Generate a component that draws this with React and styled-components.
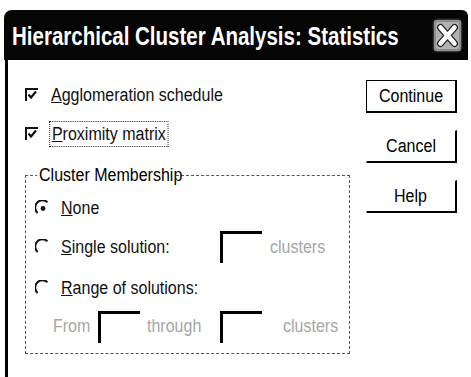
import styled, { createGlobalStyle } from "styled-components";

const Global = createGlobalStyle`
  html, body {
    margin: 0;
    background: #ffffff;
  }
  body {
    font-family: "Liberation Sans", Arial, sans-serif;
  }
`;

const Window = styled.div`
  width: 471px;
  height: 377px;
  padding-top: 10px;
  box-sizing: border-box;
  display: flex;
  flex-direction: column;
  overflow: hidden;
  background: #fff;
`;

const TitleBar = styled.div`
  height: 50px;
  margin: 0 3px 0 4px;
  background: #050505;
  border-radius: 8px 6px 0 0;
  display: flex;
  align-items: center;
  justify-content: space-between;
  padding: 0 5px 0 8px;
  box-sizing: border-box;
`;

const Title = styled.span`
  display: block;
  width: 390px;
  color: #fff;
  font-weight: bold;
  font-size: 25px;
  white-space: nowrap;
  padding-top: 2px;
  transform: scaleX(0.82);
  transform-origin: left center;
`;

// the dialog text is a squeezed sans, so each label is narrowed horizontally
const Narrow = styled.span`
  display: inline-block;
  white-space: nowrap;
  transform: scaleX(0.89);
  transform-origin: ${(p) => p.$origin || "left"} center;
`;

const Body = styled.div`
  flex: 1;
  margin-left: 5px;
  border-left: 3px solid #000;
  display: flex;
  font-size: 18px;
  color: #111;
`;

const Main = styled.div`
  width: 352px;
  padding: 22px 0 0 17px;
  box-sizing: border-box;
`;

const CheckRow = styled.label`
  display: flex;
  align-items: center;
  gap: 12px;
  height: 26px;
  margin-bottom: ${(p) => p.$gap || 0}px;
`;

const Focus = styled(Narrow)`
  outline: 1px dotted #222;
  outline-offset: 1px;
  padding: 0 1px;
  line-height: 22px;
`;

const Group = styled.fieldset`
  margin: 18px 0 0 0;
  width: 325px;
  height: 189px;
  box-sizing: border-box;
  border: 1px dashed #555;
  padding: 10px 0 0 9px;
`;

const Legend = styled.legend`
  width: 134px;
  padding: 0 2px;
  margin-left: 2px;
  font-size: 18px;
  line-height: 20px;
  color: #000;
`;

const RadioRow = styled.div`
  display: flex;
  align-items: center;
  height: ${(p) => p.$h || 26}px;
  margin-bottom: ${(p) => p.$gap || 0}px;
`;

const RadioLabel = styled.span`
  display: flex;
  align-items: center;
  gap: 11px;
  width: ${(p) => (p.$w ? `${p.$w}px` : "auto")};
`;

const InputBox = styled.div`
  width: 42px;
  height: 32px;
  flex: none;
  box-sizing: border-box;
  border-top: 3px solid #000;
  border-left: 3px solid #000;
  background: #fff;
`;

const Dim = styled(Narrow)`
  color: #a6a6a6;
  margin: ${(p) => p.$m || "0"};
  width: ${(p) => (p.$w ? `${p.$w}px` : "auto")};
`;

const Buttons = styled.div`
  display: flex;
  flex-direction: column;
  gap: 17px;
  padding: 20px 0 0 6px;
`;

const Button = styled.div`
  width: 91px;
  height: 33px;
  box-sizing: border-box;
  display: flex;
  align-items: center;
  justify-content: center;
  font-size: 18px;
  color: #000;
  border: 1px solid ${(p) => (p.$default ? "#000" : "transparent")};
  border-right: 2px solid #000;
  border-bottom: 2px solid #000;
`;

const CloseBox = () => (
  <svg width="31" height="35" viewBox="0 0 31 35">
    <rect x="1" y="1" width="29" height="33" rx="4" fill="#8e8e8e" stroke="#1a1a1a" strokeWidth="1.5" />
    <rect x="4" y="4" width="23" height="27" rx="2" fill="#b2b2b2" />
    <path d="M8.5 9.5 L22.5 25.5 M22.5 9.5 L8.5 25.5" stroke="#222" strokeWidth="7" strokeLinecap="round" />
    <path d="M8.5 9.5 L22.5 25.5 M22.5 9.5 L8.5 25.5" stroke="#fff" strokeWidth="4.5" strokeLinecap="round" />
  </svg>
);

const Check = () => (
  <svg width="14" height="14" viewBox="0 0 14 14">
    <path d="M1 13 V1 H13" fill="none" stroke="#111" strokeWidth="2" />
    <path d="M3.5 6.5 L6 9.5 L11 3.5" fill="none" stroke="#111" strokeWidth="2.2" />
  </svg>
);

const Radio = ({ on }) => (
  <svg width="15" height="16" viewBox="0 0 15 16">
    <path d="M2.6 13 A6.8 6.8 0 0 1 12.5 2.2" fill="none" stroke="#111" strokeWidth="2" />
    {on && <circle cx="8" cy="8.5" r="2.4" fill="#111" />}
  </svg>
);

export default function App() {
  return (
    <>
      <Global />
      <Window>
        <TitleBar>
          <Title>Hierarchical Cluster Analysis: Statistics</Title>
          <CloseBox />
        </TitleBar>
        <Body>
          <Main>
            <CheckRow $gap={13}>
              <Check />
              <Narrow>
                <u>A</u>gglomeration schedule
              </Narrow>
            </CheckRow>
            <CheckRow>
              <Check />
              <Focus>
                <u>P</u>roximity matrix
              </Focus>
            </CheckRow>
            <Group>
              <Legend>
                <Narrow>Cluster Membership</Narrow>
              </Legend>
              <RadioRow $gap={10}>
                <RadioLabel>
                  <Radio on />
                  <Narrow>
                    <u>N</u>one
                  </Narrow>
                </RadioLabel>
              </RadioRow>
              <RadioRow $h={32} $gap={12}>
                <RadioLabel $w={185}>
                  <Radio />
                  <Narrow>
                    <u>S</u>ingle solution:
                  </Narrow>
                </RadioLabel>
                <InputBox />
                <Dim $m="0 0 0 8px">clusters</Dim>
              </RadioRow>
              <RadioRow $gap={9}>
                <RadioLabel>
                  <Radio />
                  <Narrow>
                    <u>R</u>ange of solutions:
                  </Narrow>
                </RadioLabel>
              </RadioRow>
              <RadioRow $h={33}>
                <Dim $m="0 0 0 18px" $w={45}>
                  From
                </Dim>
                <InputBox />
                <Dim $m="0 0 0 7px" $w={73}>
                  through
                </Dim>
                <InputBox />
                <Dim $m="0 0 0 21px">clusters</Dim>
              </RadioRow>
            </Group>
          </Main>
          <Buttons>
            <Button $default>
              <Narrow $origin="center">Continue</Narrow>
            </Button>
            <Button>
              <Narrow $origin="center">Cancel</Narrow>
            </Button>
            <Button>
              <Narrow $origin="center">Help</Narrow>
            </Button>
          </Buttons>
        </Body>
      </Window>
    </>
  );
}
